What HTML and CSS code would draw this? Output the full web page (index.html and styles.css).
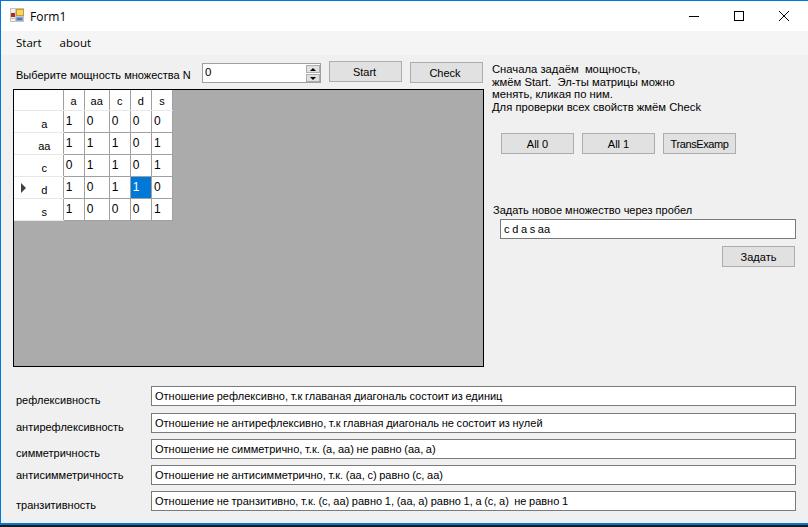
FILE: index.html
```html
<!DOCTYPE html>
<html lang="en">

<head>
  <title>Form1</title>
  <meta charset="utf-8">
  <meta name="viewport" content="width=device-width, initial-scale=1.0">
  <link rel="stylesheet" href="styles.css">
</head>

<body>
  <div class="window">
    <div class="titlebar">
      <svg class="app-icon" width="16" height="16" viewBox="0 0 16 16">
        <rect x="0" y="0" width="14" height="14" fill="#c4c4c4"/>
        <rect x="1" y="1" width="4" height="3" fill="#f2f2f2"/>
        <rect x="1" y="4" width="4" height="6" fill="#e8e8e8"/>
        <rect x="1" y="5" width="4" height="4" fill="#b8261c"/>
        <rect x="1" y="11" width="4" height="2" fill="#f2f2f2"/>
        <rect x="6" y="1" width="8" height="7" fill="#c99a2e"/>
        <rect x="7" y="2" width="6" height="5" fill="#f8d65a"/>
        <rect x="6" y="9" width="7" height="4" fill="#8aa6d8"/>
        <rect x="7" y="10" width="5" height="2" fill="#4a78c8"/>
      </svg>
      <span class="title">Form1</span>
      <div class="caption-buttons">
        <svg width="12" height="12" viewBox="0 0 12 12"><path d="M1 6.5H11" stroke="#000" fill="none"/></svg>
        <svg width="12" height="12" viewBox="0 0 12 12"><rect x="1.5" y="1.5" width="9" height="9" stroke="#000" fill="none"/></svg>
        <svg width="12" height="12" viewBox="0 0 12 12"><path d="M1 1L11 11M11 1L1 11" stroke="#000" fill="none"/></svg>
      </div>
    </div>

    <div class="menu">
      <span>Start</span>
      <span>about</span>
    </div>

    <div class="content">
      <div class="left">
        <div class="toolbar">
          <label class="size-label">Выберите мощность множества N</label>
          <div class="spinner">
            <span class="spinner-value">0</span>
            <div class="spinner-arrows">
              <span class="arrow-box"><i class="arrow-up"></i></span>
              <span class="arrow-box"><i class="arrow-down"></i></span>
            </div>
          </div>
          <button class="btn btn-start">Start</button>
          <button class="btn btn-check">Check</button>
        </div>

        <div class="grid-view">
          <table class="matrix">
            <thead>
              <tr><th class="corner"></th><th>a</th><th class="wide">aa</th><th>c</th><th>d</th><th>s</th></tr>
            </thead>
            <tbody>
              <tr><th>a</th><td>1</td><td>0</td><td>0</td><td>0</td><td>0</td></tr>
              <tr><th>aa</th><td>1</td><td>1</td><td>1</td><td>0</td><td>1</td></tr>
              <tr><th>c</th><td>0</td><td>1</td><td>1</td><td>0</td><td>1</td></tr>
              <tr><th class="current">d</th><td>1</td><td>0</td><td>1</td><td class="selected">1</td><td>0</td></tr>
              <tr><th>s</th><td>1</td><td>0</td><td>0</td><td>0</td><td>1</td></tr>
            </tbody>
          </table>
        </div>
      </div>

      <div class="right">
        <p class="help">Сначала задаём&nbsp; мощность,<br>жмём Start.&nbsp; Эл-ты матрицы можно<br>менять, кликая по ним.<br>Для проверки всех свойств жмём Check</p>
        <div class="fill-buttons">
          <button class="btn">All 0</button>
          <button class="btn">All 1</button>
          <button class="btn btn-trans">TransExamp</button>
        </div>
        <label class="set-label">Задать новое множество через пробел</label>
        <div class="field set-field">c d a s aa</div>
        <button class="btn btn-set">Задать</button>
      </div>
    </div>

    <div class="props">
      <label class="prop-label l1">рефлексивность</label>
      <div class="field">Отношение рефлексивно, т.к главаная диагональ состоит из единиц</div>
      <label class="prop-label l2">антирефлексивность</label>
      <div class="field">Отношение не антирефлексивно, т.к главная диагональ не состоит из нулей</div>
      <label class="prop-label l3">симметричность</label>
      <div class="field">Отношение не симметрично, т.к. (a, aa) не равно (aa, a)</div>
      <label class="prop-label l4">антисимметричность</label>
      <div class="field">Отношение не антисимметрично, т.к. (aa, c) равно (c, aa)</div>
      <label class="prop-label l5">транзитивность</label>
      <div class="field">Отношение не транзитивно, т.к. (c, aa) равно 1, (aa, a) равно 1, а (c, a)&nbsp; не равно 1</div>
    </div>
  </div>
</body>

</html>
```

FILE: styles.css
```css
* {
  box-sizing: border-box;
}

html, body {
  margin: 0;
  height: 100%;
}

body {
  font-family: "Liberation Sans", Arial, sans-serif;
  font-size: 11px;
  color: #000;
  background-color: #1a1a1a;
}

.window {
  height: 525px;
  border-top: 1px solid #0078d7;
  border-left: 1px solid #0078d7;
  border-bottom: 2px solid #0078d7;
  background-color: #f0f0f0;
  overflow: hidden;
}

.titlebar {
  display: flex;
  align-items: center;
  height: 30px;
  padding-left: 9px;
  background-color: #fff;
}

.app-icon {
  flex-shrink: 0;
}

.title {
  margin-left: 4px;
  font-family: "Open Sans", sans-serif;
  font-size: 12px;
}

.caption-buttons {
  display: flex;
  gap: 33px;
  margin-left: auto;
  margin-right: 18px;
}

.menu {
  display: flex;
  gap: 18px;
  height: 24px;
  padding-left: 15px;
  padding-bottom: 2px;
  align-items: center;
  font-family: "Open Sans", sans-serif;
  font-size: 11.5px;
  background-color: #f5f5f5;
}

.content {
  display: flex;
  height: 313px;
}

.left {
  width: 491px;
  padding-left: 12px;
}

.toolbar {
  display: flex;
  align-items: flex-start;
  height: 34px;
  padding-top: 6px;
}

.size-label {
  width: 186px;
  margin-left: 3px;
  margin-top: 7px;
  line-height: 14px;
  white-space: nowrap;
}

.spinner {
  display: flex;
  width: 119px;
  height: 20px;
  margin-top: 2px;
  border: 1px solid #a0a0a0;
  background-color: #fff;
}

.spinner-value {
  flex: 1;
  padding-left: 2px;
  font-size: 11.5px;
  line-height: 16px;
}

.spinner-arrows {
  display: flex;
  flex-direction: column;
  width: 14px;
  margin: 1px 0 0 0;
  gap: 1px;
}

.arrow-box {
  display: flex;
  flex: 1;
  align-items: center;
  justify-content: center;
  background-color: #e1e1e1;
  border: 1px solid #adadad;
}

.arrow-up {
  border-left: 3px solid transparent;
  border-right: 3px solid transparent;
  border-bottom: 3px solid #000;
}

.arrow-down {
  border-left: 3px solid transparent;
  border-right: 3px solid transparent;
  border-top: 3px solid #000;
}

.btn {
  width: 73px;
  height: 21px;
  padding: 0;
  font-family: "Liberation Sans", Arial, sans-serif;
  font-size: 11px;
  color: #000;
  background-color: #e1e1e1;
  border: 1px solid #adadad;
}

.btn-start {
  margin-left: 8px;
  padding-right: 2px;
}

.btn-check {
  margin-left: 8px;
  margin-top: 1px;
  padding-right: 3px;
}

.btn-trans {
  letter-spacing: -0.4px;
}

.grid-view {
  width: 471px;
  height: 278px;
  background-color: #ababab;
  border: 1px solid #000;
}

.matrix {
  border-collapse: collapse;
  table-layout: fixed;
  width: 159px;
  background-color: #fff;
  font-size: 11px;
}

.matrix th,
.matrix td {
  height: 22px;
  padding: 0;
  border: 1px solid #a0a0a0;
  font-weight: normal;
  text-align: center;
}

.matrix thead th {
  height: 20px;
  width: 21px;
  border-top: 0;
  border-bottom-color: #e8e8e8;
  padding-top: 2px;
}

.matrix thead th.wide {
  width: 25px;
}

.matrix thead .corner {
  width: 49px;
  border-left: 0;
}

.matrix tbody th {
  position: relative;
  border-left: 0;
  border-color: #e8e8e8;
  border-right-color: #a0a0a0;
  padding-top: 6px;
  padding-left: 12px;
}

.matrix td {
  text-align: left;
  padding-left: 2px;
  font-size: 12px;
}

.matrix td.selected {
  color: #fff;
  background-color: #0078d7;
}

.matrix th.current::before {
  content: "";
  position: absolute;
  left: 7px;
  top: 6px;
  border-top: 5px solid transparent;
  border-bottom: 5px solid transparent;
  border-left: 5px solid #404040;
}

.right {
  flex: 1;
  padding-top: 7px;
}

.help {
  height: 50px;
  margin: 0;
  padding-top: 1px;
  font-size: 11.25px;
  line-height: 12.5px;
}

.fill-buttons {
  display: flex;
  gap: 8px;
  margin-top: 21px;
  margin-left: 9px;
}

.set-label {
  display: block;
  margin-top: 49px;
  margin-left: 1px;
  line-height: 14px;
}

.field {
  height: 20px;
  padding-left: 3px;
  line-height: 19px;
  word-spacing: -0.4px;
  background-color: #fff;
  border: 1px solid #7a7a7a;
  white-space: nowrap;
  overflow: hidden;
}

.set-field {
  width: 296px;
  margin-top: 2px;
  margin-left: 8px;
}

.btn-set {
  display: block;
  margin-top: 7px;
  margin-left: 230px;
}

.props {
  display: grid;
  grid-template-columns: 136px 645px;
  grid-template-rows: 21px 20px 20px 20px 20px;
  row-gap: 6px;
  padding-left: 14px;
  padding-top: 18px;
}

.props .field {
  width: 645px;
}

.prop-label {
  align-self: end;
  margin-left: 1px;
  line-height: 14px;
}

.l1 { margin-bottom: 0; }
.l2 { margin-bottom: -1px; }
.l3 { margin-bottom: -1px; }
.l4 { margin-bottom: 3px; }
.l5 { margin-bottom: -1px; }
```
